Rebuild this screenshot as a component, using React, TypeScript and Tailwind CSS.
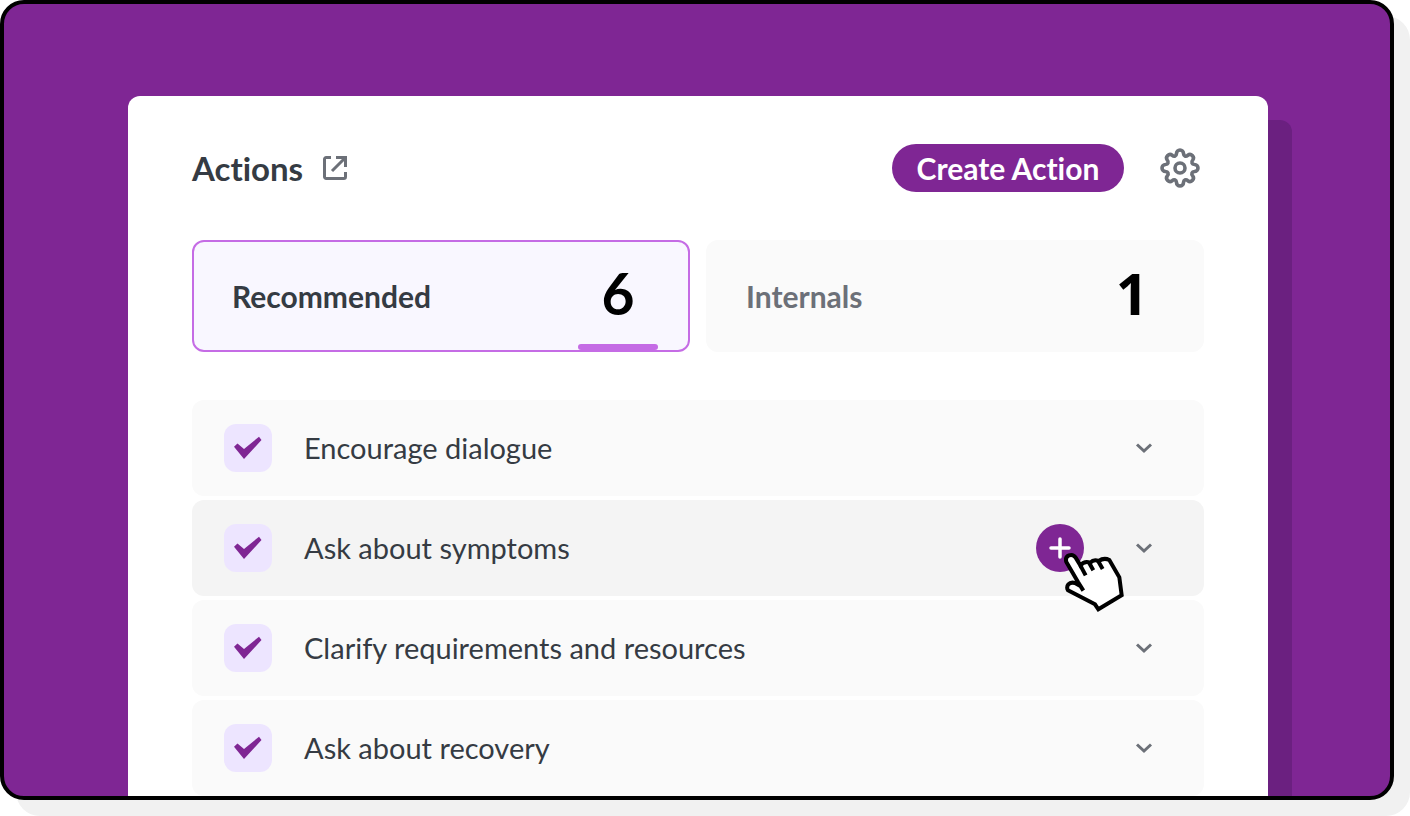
import { useState } from 'react';
import clsx from 'clsx';

const TABS = [
  { id: 'recommended', label: 'Recommended', count: 6, countFont: "font-['Lato']" },
  { id: 'internals', label: 'Internals', count: 1, countFont: "font-['Open_Sans']" },
];

const ACTIONS = [
  'Encourage dialogue',
  'Ask about symptoms',
  'Clarify requirements and resources',
  'Ask about recovery',
];

function ExternalLinkIcon() {
  return (
    <svg viewBox="0 0 24 24" className="size-6" fill="none" stroke="currentColor" strokeWidth="3">
      <path d="M8 1.5H3.2a1.7 1.7 0 0 0-1.7 1.7v17.6a1.7 1.7 0 0 0 1.7 1.7h17.6a1.7 1.7 0 0 0 1.7-1.7V16" />
      <path d="M13 1.5h9.5V11M22 2 9 15" />
    </svg>
  );
}

function GearIcon() {
  return (
    <svg viewBox="0 0 40 40" className="size-10" fill="none" stroke="currentColor" strokeWidth="3.6" strokeLinejoin="round">
      <circle cx="20" cy="20" r="5" />
      <path d="M16.500 5.500a3.500 3.500 0 0 1 7 0c.2 2.600 2.300 3.500 4.300 1.800a3.500 3.500 0 0 1 4.900 4.900c-1.700 2-.8 4.100 1.800 4.300a3.500 3.500 0 0 1 0 7c-2.600.2-3.500 2.300-1.800 4.300a3.500 3.500 0 0 1-4.900 4.900c-2-1.700-4.100-.8-4.300 1.800a3.500 3.500 0 0 1-7 0c-.2-2.600-2.300-3.500-4.300-1.800a3.500 3.500 0 0 1-4.900-4.900c1.700-2 .8-4.100-1.800-4.300a3.500 3.500 0 0 1 0-7c2.600-.2 3.500-2.300 1.800-4.300a3.500 3.500 0 0 1 4.900-4.900c2 1.700 4.100.8 4.300-1.800Z" />
    </svg>
  );
}

function HandCursor() {
  return (
    <svg viewBox="132 160 189 186" className="pointer-events-none absolute top-7 left-7 h-[62px] w-[63px]" aria-hidden="true">
      <path
        d="M187 272 139 190C133 170 157 162 167 177L181 200Q194 185 211 192Q221 181 236 187Q252 176 268 184L298 236 305 290 235 332 225 317 144 275C137 262 147 252 161 256Z"
        fill="#fff"
      />
      <path
        d="M190 276 174 250 139 190C133 170 157 162 167 177L181 200Q194 185 211 192Q221 181 236 187Q252 176 268 184L298 236 305 290 235 332 225 317 144 275C137 262 147 248 165 253L181 262"
        fill="none"
        stroke="#000"
        strokeWidth="12"
      />
      <path d="M181 200 197 230M206 190 220 215M233 185 248 211" fill="none" stroke="#000" strokeWidth="12" />
    </svg>
  );
}

interface ActionRowProps {
  label: string;
  active: boolean;
}

function ActionRow({ label, active }: ActionRowProps) {
  const [checked, setChecked] = useState(true);

  return (
    <li className={clsx('flex h-24 items-center rounded-xl pr-12 pl-8', active ? 'bg-[#f4f4f4]' : 'bg-[#fafafa]')}>
      <label className="flex flex-1 items-center gap-8">
        <span className="relative size-12 text-[#7f2694]">
          <input
            type="checkbox"
            checked={checked}
            onChange={() => setChecked(!checked)}
            className="block size-12 appearance-none rounded-xl bg-[#ede5ff]"
          />
          {checked && (
            <svg viewBox="0 0 48 48" className="pointer-events-none absolute inset-0 size-12" fill="currentColor">
              <path d="M10 22.700 13.500 19.500 20 25 35 12.800 37.500 16 20 35Z" />
            </svg>
          )}
        </span>
        <span className="text-[29px]/9 text-[#353b43]">{label}</span>
      </label>

      {active && (
        <div className="relative mr-12">
          <button aria-label="Add" className="flex size-12 items-center justify-center rounded-full bg-[#7f2694] text-white">
            <svg viewBox="0 0 24 24" className="size-6" fill="none" stroke="currentColor" strokeWidth="3.5" strokeLinecap="round">
              <path d="M12 3v18M3 12h18" />
            </svg>
          </button>
          <HandCursor />
        </div>
      )}

      <button aria-label="Expand" className="text-[#6c7078]">
        <svg viewBox="0 0 24 24" className="size-6" fill="none" stroke="currentColor" strokeWidth="3">
          <path d="m5 8.500 7 6.500 7-6.500" />
        </svg>
      </button>
    </li>
  );
}

export default function App() {
  const [tab, setTab] = useState('recommended');

  return (
    <div className="h-screen overflow-hidden bg-white pr-4 pb-4 font-['Lato',sans-serif] [font-variant-ligatures:none]">
      <div className="h-full rounded-3xl border-4 border-black bg-[#7f2694] shadow-[16px_16px_0_#f1f1f1]">
        <div className="h-full overflow-hidden rounded-[20px] pt-23 pr-[122px] pl-31">
          <main className="rounded-t-xl bg-white px-16 pt-12 pb-16 shadow-[24px_24px_0_#6b2080]">
            {/* Header */}
            <header className="flex h-12 items-center">
              <h1 className="text-[33px]/12 font-bold text-[#353b43]">Actions</h1>
              <a href="#actions" aria-label="Open actions" className="ml-5 text-[#6c7078]">
                <ExternalLinkIcon />
              </a>
              <button className="ml-auto h-12 w-58 rounded-full bg-[#7f2694] text-[30px]/12 font-bold text-white">
                Create Action
              </button>
              <button aria-label="Settings" className="ml-8 flex size-12 items-center justify-center text-[#6c7078]">
                <GearIcon />
              </button>
            </header>

            {/* Tabs */}
            <nav className="mt-12 grid grid-cols-2 gap-4">
              {TABS.map(({ id, label, count, countFont }) => (
                <button
                  key={id}
                  onClick={() => setTab(id)}
                  className={clsx(
                    'flex h-28 items-center justify-between rounded-xl border-2 pr-[30px] pl-[38px]',
                    tab === id ? 'border-[#c56ce5] bg-[#f9f7ff] text-[#353b43]' : 'border-[#fafafa] bg-[#fafafa] text-[#6c7078]',
                  )}
                >
                  <span className="text-[30px]/9 font-bold">{label}</span>
                  <span className="relative flex h-full w-20 items-center justify-center pb-1.5">
                    <span className={clsx('text-[57px]/16 font-bold text-black', countFont)}>{count}</span>
                    {tab === id && <span className="absolute inset-x-0 bottom-0 h-1.5 rounded-full bg-[#c56ce5]" />}
                  </span>
                </button>
              ))}
            </nav>

            {/* Action list */}
            <ul className="mt-12 flex flex-col gap-1">
              {ACTIONS.map((label, i) => (
                <ActionRow key={label} label={label} active={i === 1} />
              ))}
            </ul>
          </main>
        </div>
      </div>
    </div>
  );
}
